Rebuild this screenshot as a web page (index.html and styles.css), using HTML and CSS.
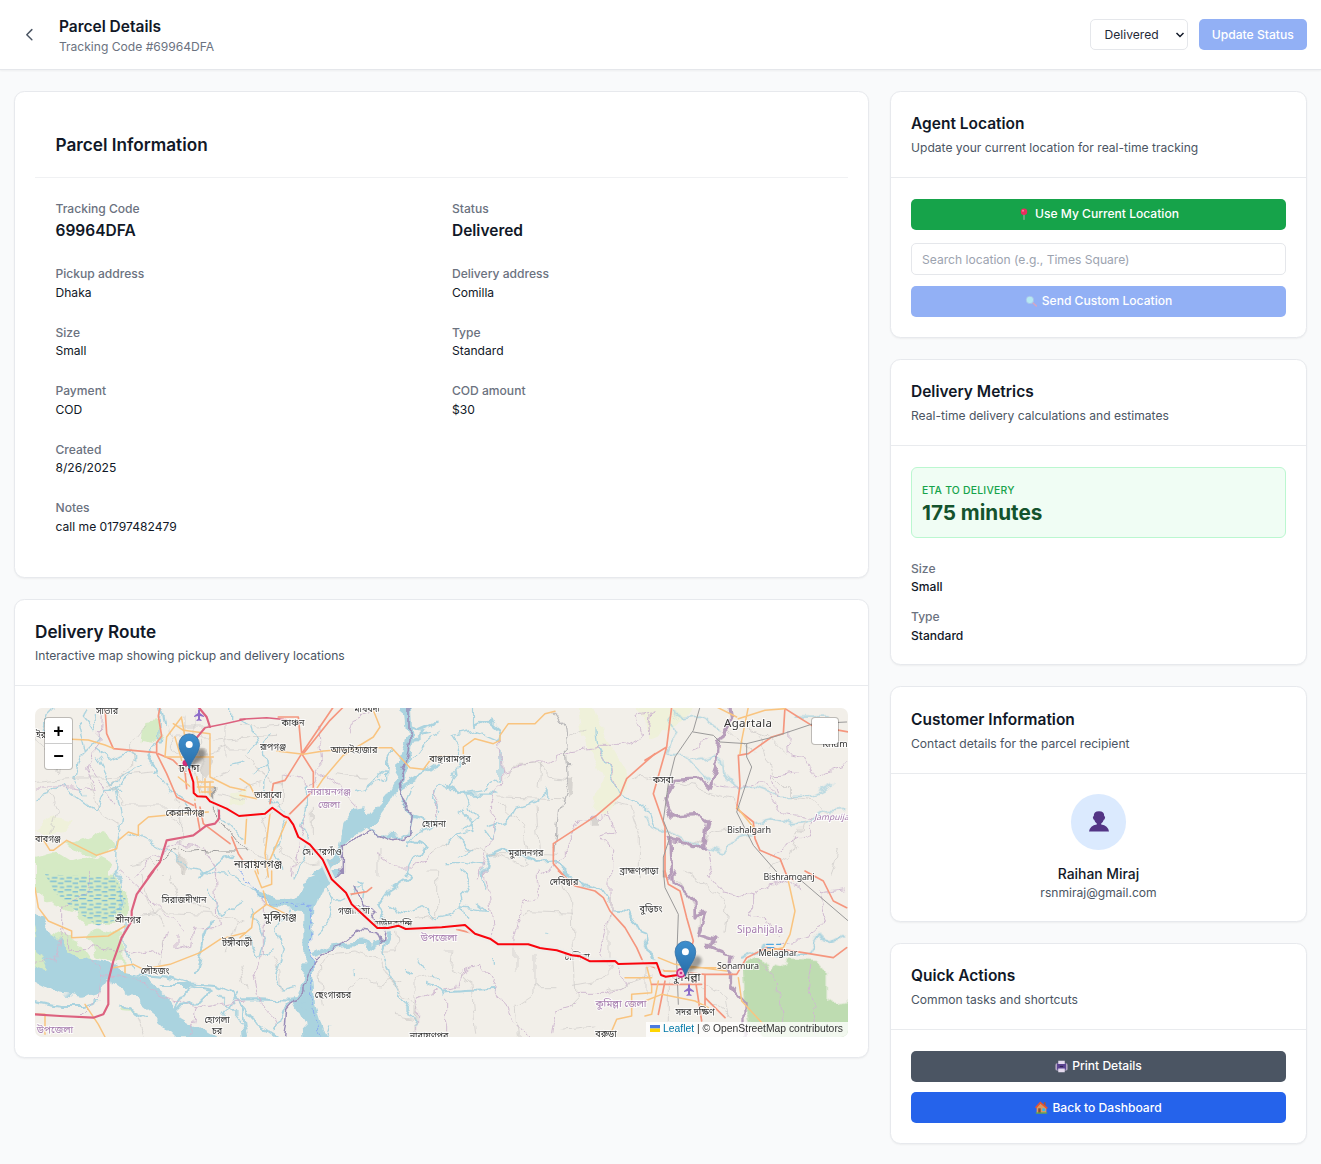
FILE: index.html
```html
<!DOCTYPE html>
<html lang="en">
<head>
<meta charset="utf-8">
<title>Parcel Details</title>
<link rel="stylesheet" href="styles.css">
</head>
<body>
<header class="topbar">
  <div class="topbar-left">
    <svg class="back" viewBox="0 0 24 24"><path d="M15 19l-7-7 7-7"/></svg>
    <div>
      <h1>Parcel Details</h1>
      <p>Tracking Code #69964DFA</p>
    </div>
  </div>
  <div class="topbar-right">
    <div class="select-wrap">
      <select><option>Delivered</option></select>
      <svg viewBox="0 0 10 8"><path d="M1.5 2l3.5 3.5L8.500 2"/></svg>
    </div>
    <button class="btn btn-muted update">Update Status</button>
  </div>
</header>

<main class="layout">
  <div class="column">
    <section class="card parcel">
      <div class="parcel-head"><h2>Parcel Information</h2></div>
      <dl class="fields">
        <div class="big"><dt>Tracking Code</dt><dd>69964DFA</dd></div>
        <div class="big"><dt>Status</dt><dd>Delivered</dd></div>
        <div><dt>Pickup address</dt><dd>Dhaka</dd></div>
        <div><dt>Delivery address</dt><dd>Comilla</dd></div>
        <div><dt>Size</dt><dd>Small</dd></div>
        <div><dt>Type</dt><dd>Standard</dd></div>
        <div><dt>Payment</dt><dd>COD</dd></div>
        <div><dt>COD amount</dt><dd>$30</dd></div>
        <div class="wide"><dt>Created</dt><dd>8/26/2025</dd></div>
        <div class="wide"><dt>Notes</dt><dd>call me 01797482479</dd></div>
      </dl>
    </section>

    <section class="card route">
      <div class="card-head large"><h2>Delivery Route</h2><p>Interactive map showing pickup and delivery locations</p></div>
      <div class="route-body">
        <div class="map">
          <svg class="tiles" viewBox="35 707 813 329" preserveAspectRatio="none">
            <defs>
              <linearGradient id="pin" x1="0" y1="0" x2="0" y2="1"><stop offset="0" stop-color="#3e8fce"/><stop offset="1" stop-color="#286da8"/></linearGradient>
              <filter id="soft" x="-30%" y="-30%" width="160%" height="160%"><feGaussianBlur stdDeviation="1.6"/></filter>
              <filter id="meander" filterUnits="userSpaceOnUse" x="25" y="697" width="833" height="349" color-interpolation-filters="sRGB">
                <feTurbulence type="fractalNoise" baseFrequency=".07" numOctaves="2" seed="4" result="noise"/>
                <feDisplacementMap in="SourceGraphic" in2="noise" scale="13" xChannelSelector="R" yChannelSelector="G"/>
                <feGaussianBlur stdDeviation=".3"/>
              </filter>
              <pattern id="marsh" width="44" height="26" patternUnits="userSpaceOnUse"><path d="M2 5h18M26 11h14M8 20h14M32 23h10" stroke="#4fa8e0" stroke-width="3"/></pattern>
            </defs>
            <rect x="35" y="707" width="813" height="329" fill="#f2efe9"/>

            <g filter="url(#meander)">
            <!-- parks, marsh and forest -->
            <g transform="translate(35 706) scale(.33333)">
              <path class="green" d="M325 45l35-5 20 40-25 30-35-5zM120 400l60-25 50 20 20 30-50 20-60-5-50-25zM0 450l60-15 50 30 70-20 40 20-10 45H0z"/>
              <path class="pale" d="M60 330l50 10-20 40-70 10-20-20zM585 260l45-10v40l-40 5z"/>
              <path fill="#ddd9d3" d="M480 120l40 0 10 45-20 35-30-15-20-30zM520 240l20 0v50l-20-10zM435 450l20 5-5 55-15 0z"/>
            </g>
            <g transform="translate(35 870) scale(.33333)">
              <path class="green" d="M0 0L240 5l40 60-5 70-40 20-30 0-50 10-40-40-60-20L0 60zM0 150l20 50 20 100-40-20zM150 200l50-30 65 20 0 85-40 0 10 0-50-10-10-40z"/>
            </g>
            <g transform="translate(445 706) scale(.33333)">
              <path class="pale" d="M400 0h50l30 90 75 130-25 45-50 60-35-15 30-100-60-120zM570 5l60-5 0 60z"/>
              <path fill="#d7d4d0" d="M368 212h20l-5 50-20 10zM437 330h22v20h-22z"/>
            </g>
            <g transform="translate(645 706) scale(.33333)">
              <path class="pale" d="M0 0h160l-45 40-40 30L10 95z"/>
            </g>
            <g transform="translate(645 870) scale(.33333)">
              <path fill="#bedcb1" d="M295 290l30-30 25 5 25 35 50-35 90 5 30 35 0 80 40 15 60-15v140H370l-50-70-20-60z"/>
            </g>

            <!-- rivers -->
            <g transform="translate(240 706) scale(.33333)">
              <path class="water" d="M487-20l25 0 5 110-15 90-20 50-27 50-45 62-25 20-45 28-35 30-5 40-35 50H205l60-50 35-40 10-75 20-28 40-7 15 18 55-63 25-45 13-65 22-70z"/>
              <path class="river w8" d="M480 230l10 50 28 45-10 50-20 15-50-5-60-22M510 60l30 10 45-20M505 110l40-30 25-5M480 240l50-30 60-40M515 325l60 20M510 400l50 25-40 20-30 60"/>
              <path class="river" d="M600 70l-40 30-40 50-20 20-10-30 60-70M450 130l-10 60-60 50-30 10M380 240l60-30 0-50 20-30M520 240l-20 60M40 200l40-30-10-60 20-30M0 40l35 20 15 50-20 20M75 140l10 50-15 60 20 30 45 40-20 60-10 60 20 50M205 240l0 60-20 60 20 40-10 50-30 60M630 220l-30 20-20 40 20 40-20 40-50 20-30 40"/>
            </g>
            <g transform="translate(240 870) scale(.33333)">
              <path class="water" d="M265 0h45l-15 25-50 30-25 55-5 140 10 150 35 110h-65l-5-60-30-60 25-50 5-50 0-170-90-10-80-65 90 35 55 0 30-50z"/>
              <path class="river w12" d="M225 248l40-20 40-8 60-5 35 10 40-20 8-50"/>
              <path class="river w8" d="M0 385l60 0 110 5 30 20M0 400l50 60 60 38M190 350l-60 70-20 60M500 0l5 20-60 40-35 50 30 40 10 30-20 60"/>
              <path class="river" d="M150 120l-40 60 20 60-25 80 20 40 40-10M20 200l30 60 50-20M35 110l40 90-15 60M230 180l40-40 10-60-50-60M260 60l40 30 40-20 20-40M345 20l30 30-10 70M440 100l50 30 60-20 40 30 40-10M425 235l25 80 30 60 30 50 20 40M340 300v10M505 290l10 15M540 270l15 25M580 310l15 10M560 340l30 10 30 20M260 498l10-40 15 0"/>
            </g>
            <g transform="translate(35 870) scale(.33333)">
              <path class="water" d="M-10 95l50 70 55 65 55 30 70 20 50 25 60 15 60 50 50 65 60 35 60 35H430l-60-60-60-50-50-40-40-30-25 40-60 15-70-10L-10 330z"/>
              <path class="green" d="M-10 170l20 60 30 70-50-20zM50 180l90 40 35 50-80-30zM250 400l60 25-50-5z"/>
              <path class="river w8" d="M0 390l80 15 60 0 50-15M300 310l100 10 60 20 80 5 50 20 30 50 10 83M380 345l80 0 70 15-40 40-70 10M250 400l80 40M465 340l-50 70 60-15M480 310l15-60 30-100"/>
              <path class="river" d="M520 50l40 80 60-40M580 0l50 40M270 150l0 90 30 50M550 370l80 100M570 430l40-60M240 0l30 40-10 60-20 20"/>
            </g>
            <g transform="translate(35 706) scale(.33333)">
              <path class="river" d="M60 0l-20 20-15 50 30 20M155 0l-10 30 40 50-10-60M195 90l-60 60-15 60 30 60M180 130l40 30 60-20 20 10M0 275l40-10 40-30 50 40 50 35 30-60 50 0M190 150l40 80 90-60M230 250l60-50M130 50l20 80M240 240l20 90-10 60-10 120M375 20l-5 80-30 40 30 60 40 60 50 30M285 375l120 60 60 50 110 20M535 290l50 60 45 50M590 0l0 50M630 165l-40 10"/>
              <path class="river w8" d="M340 150l30 40-15 10M375 0l10 30 5 30M490 505l80-50 20-10"/>
            </g>
            <g transform="translate(445 706) scale(.33333)">
              <path class="river w8" d="M0 225l50 35 110 0M90-5l0 65 40-20 35 30-10 30M115 505l15-60 45-20 60 20 40 20 50-5 45 40"/>
              <path class="river" d="M25 85l65-15 70 30M25 85l25 40-10 60-40 50M165 130l0 85-40 30-80 15M60 265l35 80-40 20M40 320l20-10 30 60-50 10-40 30M130 360l60-20 20-35 60-20 40-30M300 240l15 30M450 65l5 50 40 80 30 65 40 20 50 40 15 45M0 470l60 0 50 10M40 390l40 40-40 20M120 370l20 30 20-50"/>
            </g>
            <g transform="translate(445 870) scale(.33333)">
              <path class="river w8" d="M0 365l60-5 95-3M350 0l60 40 60 20 20 30M500 115l50 5 30 60 25 10 10 60 15 30"/>
              <path class="river" d="M55 0l15 40-20 40 15 65M110 0l15 60M0 130l60-25 70 10-30-25M145 265v15M315 190l5-5"/>
            </g>
            <g transform="translate(645 706) scale(.33333)">
              <path class="river" d="M75 10l40 25 50-5 60 35M65 140l60 10 65 70M140 160l65-15 30 20 5 40 40 40 50-5M0 330l20 30 60 20 60 30 100 25 20-30 60-20M75 20l20 60-30 60"/>
              <path class="river" d="M330 240l70 25 90 0 70-35M320 350l60-15 70 15 50-10 40-25 65-5M450 30l100 0"/>
            </g>
            <g transform="translate(645 870) scale(.33333)">
              <path class="river w8" d="M290 260l70-30 40 25 90-10 30-50 40 20 40-20M0 210l20 40"/>
            </g>

            <!-- boundaries and small lanes -->
            <g transform="translate(35 706) scale(.33333)">
              <path class="bound" d="M200 0l-5 100-40 100 20 50-60-10-115 0M165 180l40 60 30 50M300 510l40-50 90-50 80 10 35 60 0 30"/>
              <path class="lane" d="M0 90l70 110 30-100M0 220l130-10 90 0 130-15M220 240l70-70 0-60 40-50M220 220l40 60 0 20 130 0 50 60M160 230l30 80 60 40M40 250l30 60-20 70M400 60l20 90 80 0 80-30 50 0M420 60l110 0M410 90l120 0M450 30l0 130M480 20l0 200M500 80l0 190M430 190l80 30 80-30M420 280l20 60 0 170M550 260l80 20M570 60l0 90M540 100l90-10M290 470l50-10 40 40"/>
              <path class="rail" d="M370 465l50-33 80-5 60 5 70 0M535 240l0 70 95 125"/>
            </g>
            <g transform="translate(240 706) scale(.33333)">
              <path class="bound" d="M320 80l20-40 50-20M230 60l10 120-30 60-80-40M410 440l60 40 50 0 60-40M230 190l90 60 30 60M590 250l0 80M200 320l-20 70-20 110"/>
              <path class="bedge" d="M507-20l0 130-30 120 20 60 20 30-10 70-50 5-60-25-90 50v80l-20 20"/>
              <path class="lane" d="M0 55l50 5 70-5M5 90l110-5M20 140l40 60 40 30 30 0M130 200l0 100-60 30M280 200l100 10M220 310l0 70M0 250l60-20M60 320l20 60 0 130M420 430l0 80M110 420l60 50 130-10M0 420l120 50M580 440l50-40"/>
            </g>
            <g transform="translate(445 706) scale(.33333)">
              <path class="bound" d="M160 100l10 90 140-25 70-40 80-10 80 0 50-30-20-60 50-10M170 180l0 40-40 80 25 30-5 50-30 60-20 70M450 115l50 80 20 50M485 310l30 70-45 10 30 40 0 80M290 500l80-45 0-70 40-50 80-10M620 20l-10 60"/>
              <path class="lane" d="M370 95l50-25M180 200l30-25 75 0 40 35 45 5M290 175l-5 70M160 270l190 5M155 285l75 70 20 120-120-40-70-10M270 300l10 130M130 440l100 0 110 5M510 290l45 10 25 80 0 130M560 215l20-10 50 5"/>
              <path class="lane thick" d="M330 15l30 50 10 150-30 100-10 120"/>
            </g>
            <g transform="translate(645 706) scale(.33333)">
              <path class="bound" d="M10 80l5-60 20-10M190 230l60 10 60 0 40-20 50 50-20-65 80-10M425 80l5 60 50 10 30 60 100-35M370 260l50 60 80 15-15 50-60 30-50 30M180 410l20 100M140 120l50-20"/>
              <path class="lane" d="M0 215l60 5M80 225l180 45 20 50M300 60l60 20 60 60M340 80l50 130 60 60 60 10 50 50M80 380l60 40 60-40 60-10M250 70l80 70M580 430l-20 80M475 340l-40 110-60 30"/>
              <path class="nation" d="M250-20l10 55-40 70-5 75-20 60-25-25-80 5-30 60 20 50 85-5 20 15-10 80-25 5-25-15-50-10 5 110"/>
            </g>
            <g transform="translate(645 870) scale(.33333)">
              <path class="bound" d="M190 10l40 50 90 20 40-30 50-20 60 20M320 80l0 50 80 60M400 220l100-20 40-60-20-80 80-10M340 270l60 60 0 70 20 50M500 280l-10 80 20 40-5 90"/>
              <path class="lane" d="M100 30l60 100 0 60M120 0l100 70 30 40-10 80M180 340l60 40 10 60M170 350l30 50 60 40M10 290l60 20 0 180"/>
              <path class="nation" d="M90 0l0 35 60 60 0 40 30-10-20 70 50 15-20 15 40 15 25 10-5 80 50 60 0 110"/>
            </g>
            <g transform="translate(445 870) scale(.33333)">
              <path class="bound" d="M280 0l0 70-45 30-20 60-10 60M120 0l15 90 15 120M105 280l-60 30-10 40-35 10M105 280l50 70 40 90 55 60M495 20l0 110-30 120 30 30M510 280l40 60-60 30-100 0M400 400l-70 20-10 70"/>
              <path class="lane" d="M235 130l20-8 130 5M345 20l35 70 5 140 10 180M0 240l25 0-5 60 60 30 15 160M210 210l0 90M270 250l0 120-60 40 10 80M270 350l60 0M385 340l110-20 0-240M495 360l120-40M600 280l0 100M350 475l100-10"/>
            </g>
            <g transform="translate(240 870) scale(.33333)">
              <path class="bound" d="M70 90l0 160-30 60 20 80 60 80M590 360l-60 20 0 110M620 380l0 100"/>
              <path class="bedge" d="M130 508l10-90 50-60 35-95 75-45 50-40 60 10 15 30 10-50-60-60-30-60"/>
              <path d="M0 0l40 50 50 50 70 0 55 0 0 300 30 108" fill="none" stroke="#8aaaf0" stroke-width="3" stroke-dasharray="10 8"/>
              <path class="lane" d="M250 400l-15-110 30-40 80-10 70 20 30 60 60 75 30 5-15 40-60-10M0 280l20 70M120 360l0-60-20-40M315 355l50-38 55 25 60-20M470 170l5 70-50 0M525 490l0-165 60-10M560 0l30 0 0 130-60 10"/>
            </g>
            <g transform="translate(35 870) scale(.33333)">
              <path class="bound" d="M80 170l20 60 70 0 110 15 60-15 40 20 20-70M250 0l130 120 60 60M170 270l30 40-10 70-60 60M0 280l60-10 20-100 0-60 90-50 0-60M200 310l110 20 80 50 100 30 140-20M490 410l-20 88M420 190l0 40 50-10 10-50 70 0-10-170"/>
              <path class="lane" d="M290 135l100-10 130 5 110 20M320 10l20 80 50 80M400 10l30 60 90 50M380 290l10-90M600 150l-20 90M310 440l20 58"/>
            </g>
            </g>
            <g transform="translate(35 870) scale(.33333)"><path fill="url(#marsh)" d="M30 10l210 10 35 70-25 55-60 20-60-40-70-60z"/></g>

            <!-- main roads -->
            <g transform="translate(35 706) scale(.33333)">
              <path class="trunk" d="M210 0l5 80 20 45 130 12 0-30 15-20-10-60 5-27M370 140l45 20 35 35 5 50M365 140l30 60 30 70 50 25M480 290l15 80M495 300l10 50 80 60M590 390l20 50 20 30"/>
              <path class="road" d="M110 97l50 2 50 15 25 10M0 390l20 0 25 40 10 0 40-30 90 45 60-20 5-25 30-25 30 10 0-30 30-25 100-10 80-5M390 150l5-60 45-60M415 50l30 20 80 10 0 130 60 30 45 10M440 35l10 55M420 90l20 70M395 150l100 0 40 0M430 210l50 40 0 30M485 210l10 50M510 215v50M525 225v45M485 225h50M485 240h50M500 255h30"/>
              <path class="mway" d="M490 0l25 30 10 30M508 65l-55 65 0 40M340 510l35-45 20-65 55-10 25-5 40-30 25-5 12-15 0-25"/>
              <path class="mway thin" d="M510 62l60-12 60-13"/>
            </g>
            <g transform="translate(240 706) scale(.33333)">
              <path class="trunk" d="M115 30l60 0 10 110 35 55 0 55M280 0l-95 140-50 80-35 10-10 60M310 0l-40 40-80 100M220 250l-75 75"/>
              <path class="road" d="M110 132l80 10 60-10 140-10 65 0 55 60 40 5 30-40 50 0M310 145l90-55 20-30-20-50M310 145l-60 70-20 30M0 215l30 20 20 40-50-10M20 330l-5 80M90 320l-15 120 10 70M145 330l-60 140M45 460l10 40"/>
              <path class="mway thin" d="M0 37l80-5 60 6"/>
            </g>
            <g transform="translate(240 870) scale(.33333)"><path class="road" d="M45 0l20 50 30-10 0-40M70 60l10 40-40 30-5 40-35 30M80 100l60 30"/><path class="trunk" d="M330 70l50-8 15-12"/></g>
            <g transform="translate(445 706) scale(.33333)">
              <path class="road" d="M55 140l0-20 35-25 55 15 20-10 0-15 25-35 80 0 30-30 30-7"/>
              <path class="trunk" d="M630 140l-85 75-20 50-70 60-130 85 0 60 35 40"/>
            </g>
            <g transform="translate(445 870) scale(.33333)">
              <path class="trunk" d="M340 0l50 45 60 15 25 20 20 40 45 50 35 60 20 45M35 175l50 12"/>
              <path class="road" d="M605 285l15 60 0 20-60 5 0 65-45 10-15 35M540 320l80 0"/>
            </g>
            <g transform="translate(645 706) scale(.33333)">
              <path class="trunk" d="M80 0l-15 120-40 140 35 100 0 150M65 120L0 160M420 0l-5 80-35 10-70 50-30 5 5 90-10 70 50 40 5 50 15 35 60 25 20 50 20 15M420 5l80 50 110 20"/>
              <path class="road" d="M215 0l60 30M310 0l-20 100-5 40M280 35l80-25 60-5M275 300l50 60"/>
              <path class="rail" d="M165 0l-20 70-55 80-20 80-15 110 20 50-20 60 0 60M145 75l60 10 20 20 80 5 80-20 120-40 100-5M305 110l0 40 15 30-20 60-25 75 50 100 70 80"/>
            </g>
            <g transform="translate(645 870) scale(.33333)">
              <path class="rail" d="M55 0l5 50 40 80-5 140 5 130M470 30l140 120"/>
              <path class="trunk" d="M60 0l10 40 35 20 20 80 20 70-20 60M480 0l55 30 30 60 40 20M605 230l-40 30-120-20-80-10-60 30-30 50-95 0 0 100M0 280l60 20 120 10M20 340l150 0M60 330l-20 100M150 320l20 130M180 380l60 60"/>
              <path class="road" d="M430 30l20 90-15 70-20 40-50 10M40 260l50 20 155 20M0 390l50-20 100 20 40 20M130 290l110 0M40 330l-20 100-20 5M50 300l60 0M280 320l10 70 65 70"/>
              <path d="M365 220h20M368 230h18M395 220h12" stroke="#4fa8e0" stroke-width="4"/>
            </g>
            <g transform="translate(35 870) scale(.33333)">
              <path class="road" d="M0 50l10 60 30 40 70 30 0 20 110-5 50-30M235 290l60-10 30 15 80-15 90-35 60-40 75-20M0 430l30 0 0 60M150 400l40 60 20 38M270 285l0 20"/>
              <path class="mway" d="M355 0l-50 70-15 50 0 30-30 50-25 70-15 60 0 70-15 30-30 10-100-5-75-5"/>
            </g>

            <g class="places">
              <text x="107" y="713">সাভার</text><text x="41" y="737">ইর</text>
              <text class="city" x="189" y="771">ঢাকা</text><text x="185" y="815">কেরানীগঞ্জ</text>
              <text x="48" y="841">বাবগঞ্জ</text><text x="293" y="725">কাঞ্চন</text><text x="273" y="749">রূপগঞ্জ</text>
              <text x="354" y="752">আড়াইহাজার</text><text x="367" y="711">মাধবদী</text><text x="450" y="761">বাঞ্ছারামপুর</text>
              <text x="268" y="797">তারাবো</text><text class="area" x="329" y="794">নারায়নগঞ্জ</text><text class="area" x="329" y="807">জেলা</text>
              <text x="434" y="826">হোমনা</text><text x="322" y="854">সোনারগাঁও</text><text class="city" x="258" y="867">নারায়ণগঞ্জ</text>
              <text x="526" y="855">মুরাদনগর</text><text x="564" y="884">দেবিদ্বার</text><text x="639" y="873">ব্রাহ্মণপাড়া</text>
              <text x="663" y="782">কসবা</text><text x="651" y="911">বুড়িচং</text><text x="184" y="902">সিরাজদীখান</text>
              <text x="128" y="922">শ্রীনগর</text><text x="237" y="945">টঙ্গীবাড়ী</text><text class="city" x="280" y="920">মুন্সিগঞ্জ</text>
              <text x="354" y="913">গজারিয়া</text><text x="393" y="926">দাউদকান্দি</text><text class="area" x="439" y="940">উপজেলা</text>
              <text x="155" y="973">লৌহজং</text><text x="333" y="997">ছেংগারচর</text><text x="217" y="1022">হোগলা</text><text x="217" y="1033">চর</text>
              <text class="area" x="55" y="1032">উপজেলা</text><text x="429" y="1038">নারায়ণপুর</text><text x="577" y="959">চান্দিনা</text>
              <text class="area" x="621" y="1006">কুমিল্লা জেলা</text><text x="606" y="1036">বরুড়া</text><text class="city" x="686" y="980">কুমিল্লা</text>
              <text x="695" y="1014">সদর দক্ষিণ</text>
              <text class="latin big-city" x="748" y="726" textLength="48">Agartala</text>
              <text class="latin" x="835" y="746">Khum</text><text class="latin" x="749" y="832" textLength="44">Bishalgarh</text>
              <text class="latin" x="789" y="879" textLength="51">Bishramganj</text><text class="latin area" x="760" y="932" textLength="46">Sipahijala</text>
              <text class="latin" x="778" y="955" textLength="39">Melaghar</text><text class="latin" x="738" y="968" textLength="42">Sonamura</text>
              <text class="latin area park" x="814" y="819">Jampuija</text>
            </g>
            <g fill="#8d6cc9">
              <path id="plane" d="M199 708l1 1v3l4 3v1l-4-1v3l1.500 1v1l-2.500-.5-2.500.5v-1l1.500-1v-3l-4 1v-1l4-3v-3z"/>
              <use href="#plane" x="490" y="275"/>
            </g>
            <circle cx="185.500" cy="762" r="3" fill="#d32b78"/>

            <!-- delivery route: pale casing with the red line above it -->
            <path class="casing" d="M189 768L193.300 781L193.700 792L197.300 795.300L206 795.700L210 800.300L226.700 807.700L239 815L265 812.700L272.300 806.700L284 815.300L288.300 816.700L293.300 823.700L298.300 836L310 843.700L322.700 858.700L331.700 878.300L346 891.700L351.700 903.300L377.300 927L388 927L398.300 924.700L405.700 928L441.700 926.300L465 924L475 932.700L490 937.700L498.300 943.300L528.300 943.300L540 947L556.700 949.300L571.700 954.300L580 955.300L590 960.300L615 960L618.300 963L656.700 962L661 974L665.700 975.700L685 973"/>
            <path class="route-line" d="M189 768L193.300 781L193.700 792L197.300 795.300L206 795.700L210 800.300L226.700 807.700L239 815L265 812.700L272.300 806.700L284 815.300L288.300 816.700L293.300 823.700L298.300 836L310 843.700L322.700 858.700L331.700 878.300L346 891.700L351.700 903.300L377.300 927L388 927L398.300 924.700L405.700 928L441.700 926.300L465 924L475 932.700L490 937.700L498.300 943.300L528.300 943.300L540 947L556.700 949.300L571.700 954.300L580 955.300L590 960.300L615 960L618.300 963L656.700 962L661 974L665.700 975.700L685 973"/>
            <circle cx="681" cy="972" r="4" fill="#f3b5d2" stroke="#cf3084" stroke-width="1.800"/><circle cx="681" cy="972" r="1.300" fill="#cf3084"/>

            <g id="marker">
              <path d="M189 767l7-17q6-5 9 0 2 5-5 10z" fill="#000" opacity=".35" filter="url(#soft)"/>
              <path d="M189.200 767.500C187 759 178.900 752 178.900 743.500a10.300 10.600 0 0 1 20.600 0C199.500 752 191.400 759 189.200 767.500z" fill="url(#pin)" stroke="#2e6da4" stroke-width=".8"/>
              <circle cx="189.200" cy="743.500" r="3.500" fill="#fff"/>
            </g>
            <use href="#marker" x="496.200" y="207.300"/>
          </svg>
          <div class="zoom"><span>+</span><span>−</span></div>
          <div class="layers"></div>
          <div class="credit"><svg viewBox="0 0 12 8"><path fill="#4c7be1" d="M0 0h12v4H0z"/><path fill="#ffd500" d="M0 4h12v4H0z"/></svg><a>Leaflet</a> | © OpenStreetMap contributors</div>
        </div>
      </div>
    </section>
  </div>

  <aside class="column">
    <section class="card agent-card">
      <div class="card-head"><h2>Agent Location</h2><p>Update your current location for real-time tracking</p></div>
      <div class="card-body agent">
        <button class="btn btn-green">
          <svg class="emoji" viewBox="0 0 16 16"><path d="M7.400 8h1.200v7.500l-.6.500-.6-.5z" fill="#b9b3bd"/><circle cx="8" cy="5" r="4.300" fill="#e92d5e"/><circle cx="6.700" cy="3.700" r="1.300" fill="#ff7d9c"/></svg>Use My Current Location</button>
        <input type="text" placeholder="Search location (e.g., Times Square)">
        <button class="btn btn-muted">
          <svg class="emoji" viewBox="0 0 16 16"><path d="M10 10l5 4.500" stroke="#d5a6c2" stroke-width="2.200" stroke-linecap="round"/><circle cx="6.500" cy="6.500" r="5" fill="#b5e8f2" stroke="#a5bde8"/></svg>Send Custom Location</button>
      </div>
    </section>

    <section class="card metrics-card">
      <div class="card-head"><h2>Delivery Metrics</h2><p>Real-time delivery calculations and estimates</p></div>
      <div class="card-body">
        <div class="eta"><span>ETA TO DELIVERY</span><strong>175 minutes</strong></div>
        <dl class="metrics">
          <div><dt>Size</dt><dd>Small</dd></div>
          <div><dt>Type</dt><dd>Standard</dd></div>
        </dl>
      </div>
    </section>

    <section class="card customer-card">
      <div class="card-head"><h2>Customer Information</h2><p>Contact details for the parcel recipient</p></div>
      <div class="card-body customer">
        <div class="avatar"><svg viewBox="0 0 20 21"><path d="M4.800 5Q4.500 .3 10 .3T15.200 5Q16.800 5.500 15.800 7.800 15.300 9 14.800 8.800 14 11.500 12.200 12.500V13.500Q19 14.500 20 20.500H0Q1 14.500 7.800 13.500V12.500Q6 11.500 5.200 8.800 4.700 9 4.200 7.800 3.200 5.500 4.800 5z" fill="#533585"/></svg></div>
        <strong>Raihan Miraj</strong>
        <span>rsnmiraj@gmail.com</span>
      </div>
    </section>

    <section class="card actions-card">
      <div class="card-head"><h2>Quick Actions</h2><p>Common tasks and shortcuts</p></div>
      <div class="card-body actions">
        <button class="btn btn-gray">
          <svg class="emoji wide-emoji" viewBox="0 0 16 16"><rect x=".5" y="4" width="15" height="9" rx="2" fill="#b3a6c4"/><rect x="2.500" y="4" width="11" height="8" fill="#5b4391"/><path d="M4 1h8v4H4zM4 10.500h8V15H4z" fill="#e4daee"/><path d="M6 8h4" stroke="#322652" stroke-width="1.400"/></svg>Print Details</button>
        <button class="btn btn-blue">
          <svg class="emoji wide-emoji" viewBox="0 0 16 16"><path d="M2 7l5-4 7 5v7H2z" fill="#d99a63"/><path d="M11 1.500h2V6h-2z" fill="#a4543f"/><path d="M.8 8.500L6.500 2l8.700 7" fill="none" stroke="#e8532f" stroke-width="2"/><path d="M4 9h3v6H4z" fill="#8b4c35"/><path d="M9 9h3.500v3.500H9z" fill="#35b8ef"/><path d="M1 14h14v1.500H1z" fill="#57a949"/></svg>Back to Dashboard</button>
      </div>
    </section>
  </aside>
</main>
</body>
</html>
```
FILE: styles.css
```css
* { box-sizing: border-box; }
body {
  margin: 0;
  min-height: 1164px;
  background: #f9fafb;
  color: #111827;
  font: 12.08px/17.4px Inter, "Noto Sans", sans-serif;
}
h1, h2, p, dl, dd { margin: 0; }
button, input, select { font: inherit; }

.topbar {
  display: flex;
  justify-content: space-between;
  align-items: center;
  height: 69.500px;
  padding: 0 14px 0 20px;
  background: #fff;
  border-bottom: 1px solid #e5e7eb;
  box-shadow: 0 1px 2px rgba(0, 0, 0, .05);
}
.topbar-left { display: flex; align-items: center; gap: 21px; padding-top: 3px; }
.back { width: 17.400px; height: 17.400px; margin: -2px 0 0 .5px; fill: none; stroke: #4b5563; stroke-width: 2; stroke-linecap: round; stroke-linejoin: round; }
.topbar h1 { font-size: 15.500px; line-height: 22px; font-weight: 600; }
.topbar p { color: #6b7280; line-height: 18.500px; }
.topbar-right { display: flex; gap: 10.400px; }
.select-wrap { position: relative; width: 98px; }
.select-wrap select {
  appearance: none;
  width: 100%;
  height: 31px;
  padding: 0 13.500px;
  border: 1px solid #e5e7eb;
  border-radius: 5px;
  background: #fff;
  color: #1f2937;
}
.select-wrap svg { position: absolute; right: 3px; top: 12px; width: 10px; height: 8px; fill: none; stroke: #111827; stroke-width: 1.500; }

.btn {
  display: flex;
  align-items: center;
  justify-content: center;
  gap: 4px;
  width: 100%;
  height: 31px;
  padding: 0;
  border: 0;
  border-radius: 5px;
  color: #fff;
  font-weight: 500;
}
.btn-muted { background: #92b0f5; }
.btn-green { background: #16a34a; }
.btn-gray { background: #4b5563; }
.btn-blue { background: #2563eb; }
.update { width: 108.500px; font-size: 12.150px; }
.emoji { width: 12px; height: 12px; margin-right: 1px; }
.wide-emoji { width: 13px; height: 13px; margin-right: 0; }

.layout {
  display: grid;
  grid-template-columns: 855px 417px;
  gap: 21px;
  align-items: start;
  padding: 21px 14px 20px;
}
.column { display: flex; flex-direction: column; gap: 21px; }
.card {
  background: #fff;
  border: 1px solid #e7e9ed;
  border-radius: 10.400px;
  box-shadow: 0 1px 2px rgba(0, 0, 0, .05);
}
.card-head { height: 86.500px; padding: 20.500px 20px; border-bottom: 1px solid #e9ebee; }
.card-head h2 { font-size: 15.500px; line-height: 24.300px; font-weight: 600; }
.card-head p { margin-top: 2.800px; color: #4b5563; }
.card-head.large h2 { font-size: 17.200px; }
.card-body { padding: 20.500px 20px; }
.agent-card { height: 247px; }
.metrics-card { height: 306.500px; }
.customer-card { height: 235.500px; }
.actions-card { height: 201px; }

.parcel { height: 487px; padding: 20px; }
.parcel-head { height: 66.500px; padding: 20px 20.500px; border-bottom: 1px solid #f0f1f3; }
.parcel-head h2 { font-size: 17.200px; line-height: 25px; font-weight: 600; }
.fields { display: grid; grid-template-columns: 1fr 1fr; gap: 20.900px; padding: 22px 20.500px 0; }
.fields dt, .metrics dt { color: #6b7280; font-weight: 500; }
.fields dd { line-height: 20.200px; }
.fields .big dd { font-size: 15.500px; line-height: 27px; font-weight: 600; }
.wide { grid-column: 1 / -1; }

.route { height: 459.500px; }
.route-body { padding: 21.500px 20px; }
.map { position: relative; height: 329px; border-radius: 7px; overflow: hidden; }
.tiles { display: block; width: 100%; height: 100%; }
.tiles path { stroke-linejoin: round; stroke-linecap: round; }
.green { fill: #d5eac4; }
.pale { fill: #eff1da; }
.water { fill: #aad3df; }
.river { fill: none; stroke: #aad3df; stroke-width: 4; }
.w8 { stroke-width: 6.500; }
.w12 { stroke-width: 13; }
.lane, .rail, .road, .trunk, .mway, .bound, .bedge, .nation { fill: none; }
.lane { stroke: #cbc8c7; stroke-width: 2; }
.thick { stroke: #b9b8b9; stroke-width: 3.500; }
.rail { stroke: #9a9999; stroke-width: 3; }
.road { stroke: #f9c47f; stroke-width: 4.500; }
.trunk { stroke: #f5967e; stroke-width: 5; }
.mway { stroke: #dc617f; stroke-width: 6.500; }
.thin { stroke-width: 4.500; }
.bound { stroke: #cfb9d0; stroke-width: 3; stroke-dasharray: 16 5; }
.bedge { stroke: #9a8db8; stroke-width: 4.500; }
.nation { stroke: #ad8fb3; stroke-width: 10; stroke-opacity: .85; }
.casing { fill: none; stroke: #efedea; stroke-opacity: .85; stroke-width: 7; }
.route-line { fill: none; stroke: #f9050d; stroke-width: 2; }
.places text {
  font: 9px "Noto Sans Bengali", "Noto Sans", sans-serif;
  fill: #333;
  text-anchor: middle;
  paint-order: stroke;
  stroke: rgba(255, 255, 255, .75);
  stroke-width: 2px;
}
.places .city { font-size: 11px; }
.places .big-city { font-size: 11.500px; }
.places .area { fill: #a67daf; font-size: 10px; }
.places .park { font-size: 8.500px; font-style: italic; text-anchor: start; }
.zoom {
  position: absolute;
  left: 9px;
  top: 9px;
  width: 29px;
  border: 1.700px solid rgba(0, 0, 0, .22);
  border-radius: 4px;
  background: #fff;
  background-clip: padding-box;
}
.zoom span { display: block; height: 25.500px; font: bold 18px/26px "Liberation Sans", sans-serif; text-align: center; color: #000; }
.zoom span + span { border-top: 1px solid #ccc; line-height: 24px; }
.layers { position: absolute; right: 9px; top: 9px; width: 28px; height: 28px; border: 1.700px solid rgba(0, 0, 0, .22); border-radius: 4px; background: #fff; background-clip: padding-box; }
.credit {
  position: absolute;
  right: 0;
  bottom: 0;
  padding: 0 5px 0 4px;
  background: rgba(255, 255, 255, .8);
  color: #333;
  font: 10.350px/14.500px "Liberation Sans", sans-serif;
  white-space: nowrap;
}
.credit svg { width: 10.500px; height: 7px; margin-right: 3px; }
.credit a { color: #0078a8; }

.agent input {
  display: block;
  width: 100%;
  height: 32px;
  margin: 13.500px 0 10.500px;
  padding: 0 10px;
  border: 1px solid #e5e7eb;
  border-radius: 5px;
  background: #fff;
}
.agent input::placeholder { color: #9ca3af; }
.eta { display: flex; flex-direction: column; height: 71px; padding: 14px 10px; border: 1px solid #bbf7d0; border-radius: 6px; background: #f0fdf4; }
.eta span { color: #16a34a; font-size: 10.400px; font-weight: 500; letter-spacing: .22px; }
.eta strong { color: #14532d; font-size: 20.700px; line-height: 28px; font-weight: 700; }
.metrics { display: grid; gap: 11.300px; padding-top: 22px; }
.metrics dd { font-weight: 500; line-height: 20.200px; }
.customer { display: flex; flex-direction: column; align-items: center; }
.avatar { display: grid; place-items: center; width: 55.500px; height: 55.500px; margin-bottom: 14px; border-radius: 50%; background: #dbeafe; }
.avatar svg { width: 20px; height: 21px; }
.customer strong { font-size: 13.900px; line-height: 20px; font-weight: 500; }
.customer span { color: #4b5563; }
.actions { display: grid; gap: 10.400px; }
```
